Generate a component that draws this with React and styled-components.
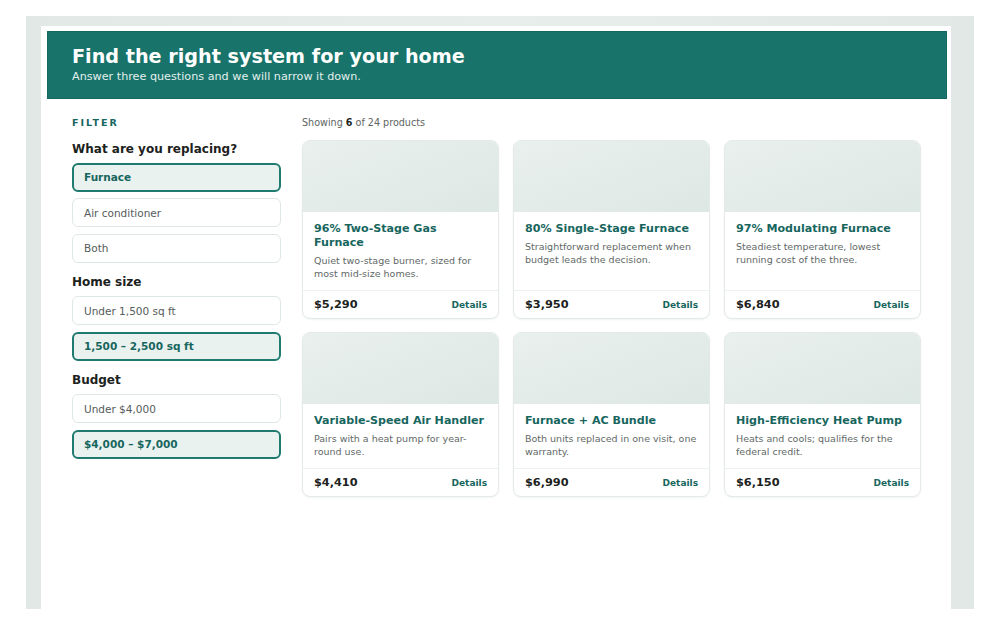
import React from 'react'
import styled, { createGlobalStyle } from 'styled-components'

const GlobalStyle = createGlobalStyle`
  html, body {
    margin: 0;
    padding: 0;
    background: #ffffff;
  }
  * {
    box-sizing: border-box;
  }
  body {
    font-family: 'DejaVu Sans', 'Noto Sans', sans-serif;
    color: #1f2624;
  }
`

const questions = [
  {
    label: 'What are you replacing?',
    options: ['Furnace', 'Air conditioner', 'Both'],
    selected: 0,
  },
  {
    label: 'Home size',
    options: ['Under 1,500 sq ft', '1,500 – 2,500 sq ft'],
    selected: 1,
  },
  {
    label: 'Budget',
    options: ['Under $4,000', '$4,000 – $7,000'],
    selected: 1,
  },
]

const products = [
  {
    name: '96% Two-Stage Gas Furnace',
    text: 'Quiet two-stage burner, sized for most mid-size homes.',
    price: '$5,290',
  },
  {
    name: '80% Single-Stage Furnace',
    text: 'Straightforward replacement when budget leads the decision.',
    price: '$3,950',
  },
  {
    name: '97% Modulating Furnace',
    text: 'Steadiest temperature, lowest running cost of the three.',
    price: '$6,840',
  },
  {
    name: 'Variable-Speed Air Handler',
    text: 'Pairs with a heat pump for year-round use.',
    price: '$4,410',
  },
  {
    name: 'Furnace + AC Bundle',
    text: 'Both units replaced in one visit, one warranty.',
    price: '$6,990',
  },
  {
    name: 'High-Efficiency Heat Pump',
    text: 'Heats and cools; qualifies for the federal credit.',
    price: '$6,150',
  },
]

export default function App() {
  return (
    <>
      <GlobalStyle />
      <Frame>
        <Page>
          <Header>
            <Title>Find the right system for your home</Title>
            <Subtitle>Answer three questions and we will narrow it down.</Subtitle>
          </Header>
          <Content>
            <Sidebar>
              <FilterLabel>Filter</FilterLabel>
              {questions.map(q => (
                <Group key={q.label}>
                  <Question>{q.label}</Question>
                  {q.options.map((opt, i) => (
                    <Option key={opt} active={i === q.selected}>
                      {opt}
                    </Option>
                  ))}
                </Group>
              ))}
            </Sidebar>
            <Main>
              <Count>
                Showing <b>6</b> of 24 products
              </Count>
              <Grid>
                {products.map(p => (
                  <Card key={p.name}>
                    <Thumb />
                    <CardBody>
                      <CardTitle>{p.name}</CardTitle>
                      <CardText>{p.text}</CardText>
                    </CardBody>
                    <CardFooter>
                      <Price>{p.price}</Price>
                      <DetailsLink>Details</DetailsLink>
                    </CardFooter>
                  </Card>
                ))}
              </Grid>
            </Main>
          </Content>
        </Page>
      </Frame>
    </>
  )
}

const Frame = styled.div`
  margin: 16px 0 0 26px;
  width: 948px;
  height: 593px;
  padding: 10px 23px 0 15px;
  background: linear-gradient(90deg, #e1e8e5 0%, #e8eeec 50%, #e1e8e5 100%);
`

const Page = styled.div`
  height: 100%;
  background: #ffffff;
  padding: 5px 4px 0 6px;
`

const Header = styled.header`
  height: 68px;
  background: #18736a;
  border: 1px solid #12675f;
  padding: 13px 24px 0;
  color: #ffffff;
`

const Title = styled.h1`
  margin: 0;
  font-size: 19.2px;
  font-weight: 700;
  line-height: 23px;
`

const Subtitle = styled.p`
  margin: 2px 0 0;
  font-size: 11.2px;
  line-height: 14px;
  color: #e2efec;
`

const Content = styled.div`
  display: flex;
  gap: 21px;
  padding: 18px 27px 0 25px;
`

const Sidebar = styled.aside`
  width: 209px;
  flex-shrink: 0;
`

const FilterLabel = styled.div`
  font-size: 9.5px;
  font-weight: 700;
  letter-spacing: 2px;
  text-transform: uppercase;
  color: #17665e;
  line-height: 12px;
`

const Group = styled.div`
  display: flex;
  flex-direction: column;
  gap: 6.5px;
  margin-top: 11.5px;

  &:first-of-type {
    margin-top: 11px;
  }
`

const Question = styled.div`
  font-size: 12px;
  font-weight: 700;
  color: #1c2220;
  line-height: 16px;
  margin-bottom: -0.5px;
`

const Option = styled.div`
  height: 29px;
  display: flex;
  align-items: center;
  border-radius: 6px;
  font-size: 10.5px;
  border: ${p => (p.active ? '2px solid #1f7a70' : '1px solid #dfe7e4')};
  padding: 0 10px 0 ${p => (p.active ? '10px' : '11px')};
  background: ${p => (p.active ? '#eaf2f0' : '#ffffff')};
  color: ${p => (p.active ? '#17665e' : '#555c5a')};
  font-weight: ${p => (p.active ? 700 : 400)};
`

const Main = styled.main`
  flex: 1;
`

const Count = styled.div`
  font-size: 9.6px;
  color: #5d6462;
  line-height: 12px;

  b {
    color: #1f2624;
  }
`

const Grid = styled.div`
  display: grid;
  grid-template-columns: repeat(3, 197px);
  column-gap: 14px;
  row-gap: 13px;
  margin-top: 11px;
`

const Card = styled.div`
  display: flex;
  flex-direction: column;
  border: 1px solid #e3eae7;
  border-radius: 8px;
  overflow: hidden;
  background: #ffffff;
  box-shadow: 0 1px 2px rgba(20, 60, 50, 0.05);
`

const Thumb = styled.div`
  height: 71px;
  background: linear-gradient(160deg, #e9f0ee 0%, #e2ebe8 60%, #dde7e4 100%);
`

const CardBody = styled.div`
  padding: 10px 10px 10px 11px;
`

const CardTitle = styled.h3`
  margin: 0;
  font-size: 11.1px;
  font-weight: 700;
  line-height: 14px;
  color: #17665e;
`

const CardText = styled.p`
  margin: 4px 0 0;
  font-size: 9.5px;
  line-height: 13px;
  color: #626967;
`

const CardFooter = styled.div`
  margin-top: auto;
  border-top: 1px solid #edf1ef;
  display: flex;
  align-items: center;
  justify-content: space-between;
  height: 28px;
  padding: 0 11px;
`

const Price = styled.span`
  font-size: 11.3px;
  font-weight: 700;
  color: #1c2220;
`

const DetailsLink = styled.a`
  font-size: 9px;
  font-weight: 700;
  color: #17665e;
  cursor: pointer;
`
